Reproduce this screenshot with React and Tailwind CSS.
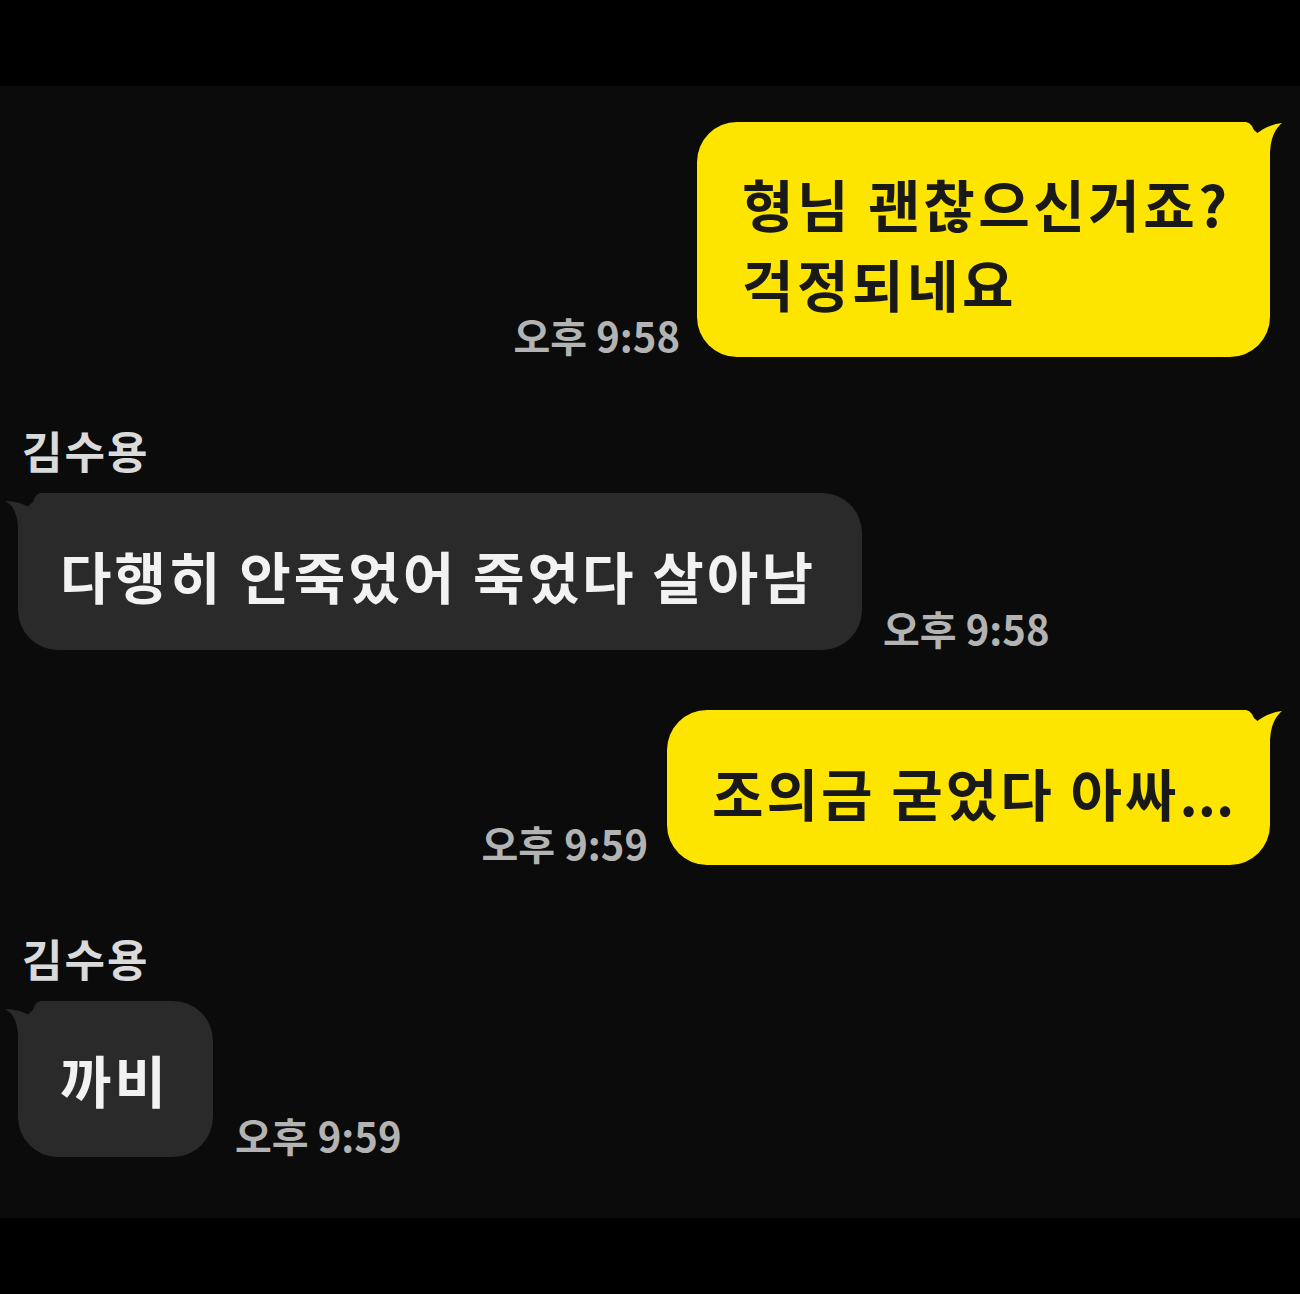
import React from 'react';

const FONT = { fontFamily: '"Noto Sans CJK KR", "Noto Sans", sans-serif' };

// 말풍선 꼬리 (오른쪽 위 / 왼쪽 위)
const TailRight = ({ color }) => (
  <svg className="absolute top-0 right-[-12px]" width="56" height="44" viewBox="0 0 56 44">
    <path d="M0 0 L20 0 Q27 1 29 13 Q40 3 56 1 Q45 10 44 30 L44 44 L0 44 Z" fill={color} />
  </svg>
);

const TailLeft = ({ color }) => (
  <svg className="absolute top-0 left-[-13px]" width="56" height="48" viewBox="0 0 56 48">
    <path d="M56 0 L36 0 Q28 1 27 16 Q15 8 0 8 Q12 14 13 34 L13 48 L56 48 Z" fill={color} />
  </svg>
);

const Time = ({ children }) => (
  <span className="text-[40px] leading-[40px] font-bold text-[#b3b3b3] mb-[2px] whitespace-nowrap">
    {children}
  </span>
);

const Name = ({ className }) => (
  <div className={`pl-[22px] text-[44px] leading-[48px] tracking-[2px] font-bold text-[#dadada] ${className}`}>김수용</div>
);

const App = () => {
  return (
    <div className="w-[1300px] h-[1294px] bg-black flex flex-col" style={FONT}>
      <div className="h-[86px] shrink-0" />
      <div className="h-[1132px] bg-[#0b0b0b] flex flex-col pt-[36px]">
        {/* 내 메시지 1 */}
        <div className="flex justify-end items-end gap-[17px] pr-[30px]">
          <Time>오후 9:58</Time>
          <div className="relative w-[573px] h-[235px] bg-[#fee500] rounded-[40px] pl-[45px] pt-[41px] text-[56px] leading-[80px] tracking-[3.5px] font-bold text-[#191919]">
            <TailRight color="#fee500" />
            <p className="relative whitespace-nowrap">형님 괜찮으신거죠?</p>
            <p className="relative whitespace-nowrap">걱정되네요</p>
          </div>
        </div>

        {/* 상대 메시지 1 */}
        <Name className="mt-[69px]" />
        <div className="flex items-end gap-[21px] pl-[18px] mt-[19px]">
          <div className="relative w-[844px] h-[157px] bg-[#2a2a2a] rounded-[40px] pl-[42px] pt-[42px] text-[56px] leading-[80px] tracking-[3px] font-bold text-[#f2f2f2]">
            <TailLeft color="#2a2a2a" />
            <p className="relative whitespace-nowrap">다행히 안죽었어 죽었다 살아남</p>
          </div>
          <Time>오후 9:58</Time>
        </div>

        {/* 내 메시지 2 */}
        <div className="flex justify-end items-end gap-[19px] pr-[30px] mt-[60px]">
          <Time>오후 9:59</Time>
          <div className="relative w-[603px] h-[155px] bg-[#fee500] rounded-[40px] pl-[45px] pt-[42px] text-[56px] leading-[80px] tracking-[3px] font-bold text-[#191919]">
            <TailRight color="#fee500" />
            <p className="relative whitespace-nowrap">
              조의금 굳었다 아싸<span className="tracking-normal">...</span>
            </p>
          </div>
        </div>

        {/* 상대 메시지 2 */}
        <Name className="mt-[69px]" />
        <div className="flex items-end gap-[22px] pl-[18px] mt-[19px]">
          <div className="relative w-[195px] h-[156px] bg-[#2a2a2a] rounded-[40px] pl-[42px] pt-[38px] text-[56px] leading-[80px] tracking-[3px] font-bold text-[#f2f2f2]">
            <TailLeft color="#2a2a2a" />
            <p className="relative whitespace-nowrap">까비</p>
          </div>
          <Time>오후 9:59</Time>
        </div>
      </div>
    </div>
  );
};

export default App;
